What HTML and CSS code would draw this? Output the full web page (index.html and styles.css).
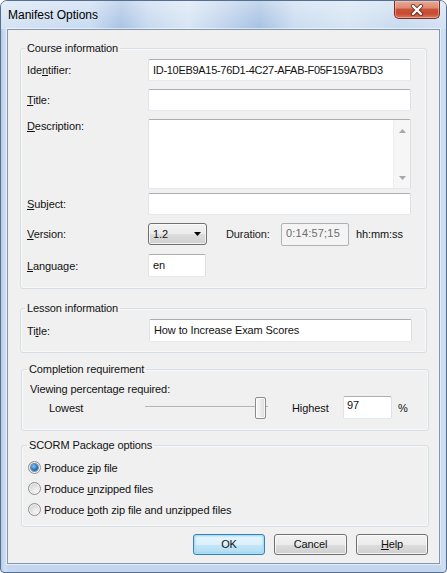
FILE: index.html
```html
<!DOCTYPE html>
<html>
<head>
<meta charset="utf-8">
<title>Manifest Options</title>
<link rel="stylesheet" href="styles.css">
</head>
<body>
<div class="window">
  <div class="titlebar">
    <span class="title">Manifest Options</span>
    <div class="close">
      <svg width="14" height="12" viewBox="0 0 14 12">
        <path d="M3 2 L11 10 M11 2 L3 10" stroke="#4a1a10" stroke-opacity="0.7" stroke-width="4.2" stroke-linecap="round" fill="none"/>
        <path d="M3 2 L11 10 M11 2 L3 10" stroke="#ffffff" stroke-width="2.4" stroke-linecap="round" fill="none"/>
      </svg>
    </div>
  </div>
  <div class="client">
    <fieldset class="group course">
      <legend>Course information</legend>
      <div class="rows">
        <div class="row r-id"><span class="lbl">Ide<u>n</u>tifier:</span><div class="tb wide id">ID-10EB9A15-76D1-4C27-AFAB-F05F159A7BD3</div></div>
        <div class="row r-title"><span class="lbl"><u>T</u>itle:</span><div class="tb wide"></div></div>
        <div class="row r-desc"><span class="lbl"><u>D</u>escription:</span>
          <div class="ta">
            <div class="ta-area"></div>
            <div class="sb">
              <svg width="7" height="4" viewBox="0 0 7 4"><path d="M0 4 L3.5 0 L7 4 Z" fill="#a8a8a8"/></svg>
              <svg width="7" height="4" viewBox="0 0 7 4"><path d="M0 0 L7 0 L3.5 4 Z" fill="#a8a8a8"/></svg>
            </div>
          </div>
        </div>
        <div class="row r-subj"><span class="lbl"><u>S</u>ubject:</span><div class="tb wide"></div></div>
        <div class="row r-ver"><span class="lbl"><u>V</u>ersion:</span>
          <div class="select"><span>1.2</span><svg width="7" height="4" viewBox="0 0 7 4"><path d="M0 0 L7 0 L3.5 4 Z" fill="#000"/></svg></div>
          <span class="dur-lbl">Duration:</span>
          <div class="tb dur">0:14:57;15</div>
          <span class="hms">hh:mm:ss</span>
        </div>
        <div class="row r-lang"><span class="lbl"><u>L</u>anguage:</span><div class="tb lang">en</div></div>
      </div>
    </fieldset>

    <fieldset class="group lesson">
      <legend>Lesson information</legend>
      <div class="rows">
        <div class="row r-ltitle"><span class="lbl lbl2">Ti<u>t</u>le:</span><div class="tb wide">How to Increase Exam Scores</div></div>
      </div>
    </fieldset>

    <fieldset class="group completion">
      <legend>Completion requirement</legend>
      <div class="rows">
        <div class="view">Viewing percentage required:</div>
        <div class="slrow">
          <span class="low">Lowest</span>
          <div class="slider"><div class="thumb"></div></div>
          <span class="high">Highest</span>
          <div class="tb pct">97</div>
          <span class="pc">%</span>
        </div>
      </div>
    </fieldset>

    <fieldset class="group scorm">
      <legend>SCORM Package options</legend>
      <div class="rows">
        <div class="radio-row"><span class="radio checked"></span><span>Produce <u>z</u>ip file</span></div>
        <div class="radio-row"><span class="radio"></span><span>Produce <u>u</u>nzipped files</span></div>
        <div class="radio-row"><span class="radio"></span><span>Produce <u>b</u>oth zip file and unzipped files</span></div>
      </div>
    </fieldset>

    <div class="buttons">
      <div class="btn default">OK</div>
      <div class="btn cancel">Cancel</div>
      <div class="btn"><u>H</u>elp</div>
    </div>
  </div>
</div>
</body>
</html>
```
FILE: styles.css
```css
* { box-sizing: border-box; }
html, body { margin: 0; padding: 0; }
body {
  width: 447px;
  height: 573px;
  overflow: hidden;
  background: #ffffff;
  font-family: "Liberation Sans", Arial, sans-serif;
  font-size: 11px;
  letter-spacing: -0.1px;
  color: #111;
}
u { text-decoration: underline; text-underline-offset: 1px; }

.window {
  width: 447px;
  height: 573px;
  border: 1px solid #55708f;
  border-radius: 7px 7px 4px 4px;
  overflow: hidden;
  display: flex;
  flex-direction: column;
  background: linear-gradient(90deg, #b6cde8 0px, #cfdff1 4px, #c4d7ee 8px, #c4d7ee 439px, #d2e1f2 443px, #b3cbe7 447px);
}

.titlebar {
  height: 28px;
  display: flex;
  justify-content: space-between;
  align-items: flex-start;
  padding: 0 6px 0 7px;
  background:
    linear-gradient(180deg, rgba(255,255,255,0.35) 0px, rgba(255,255,255,0) 28px),
    linear-gradient(90deg, #d6e4f3 0%, #cfdff1 8%, #c9dbf0 20%, #a9c3e3 27%, #c6d9ef 33%, #d8e5f4 42%, #b9cfea 52%, #a6c1e2 58%, #cadcf0 66%, #d6e4f3 78%, #c7daef 90%, #d3e2f3 100%);
}
.title {
  font-family: "Liberation Sans", Arial, sans-serif;
  font-size: 12px;
  letter-spacing: 0;
  line-height: 28px;
  color: #000;
}
.close {
  width: 46px;
  height: 18px;
  border: 1px solid #7b2d21;
  border-top: none;
  border-radius: 0 0 5px 5px;
  background: linear-gradient(180deg, #e9a995 0%, #dc8a73 40%, #c9523a 50%, #c84a31 75%, #d97a5f 100%);
  box-shadow: inset 0 0 0 1px rgba(255,220,210,0.45);
  display: flex;
  align-items: center;
  justify-content: center;
}

.client {
  margin: 0 6px;
  height: 535px;
  border: 1px solid #8397b0;
  background: #f0f0f0;
  box-shadow: 0 0 0 1px rgba(255,255,255,0.55);
}

.group {
  margin: 0;
  padding: 0;
  min-width: 0;
  border: 1px solid #d5dfe5;
  border-radius: 3px;
  box-shadow: inset 0 0 0 1px rgba(255,255,255,0.5);
}
.group legend {
  padding: 0 2px;
  margin-left: 4px;
  line-height: 14px;
  font-size: 11px;
  color: #111;
}
.course { margin: 11px 0 0 12px; width: 407px; height: 248px; }
.lesson { margin: 12px 0 0 12px; width: 407px; height: 52px; }
.completion { margin: 9px 0 0 13px; width: 408px; height: 69px; }
.scorm { margin: 7px 0 0 13px; width: 408px; height: 89px; }
.completion legend, .scorm legend { margin-left: 5px; }

.course .rows { padding: 4px 0 0 6px; }
.lesson .rows { padding: 4px 0 0 6px; }
.completion .rows { padding: 6px 0 0 8px; }
.scorm .rows { padding: 5px 0 0 6px; }

.row { display: flex; align-items: center; }
.lbl { width: 121px; flex: none; }
.lbl2 { width: 122px; }
.r-id { height: 22px; margin-bottom: 8px; }
.r-title { height: 22px; margin-bottom: 8px; }
.r-desc { height: 70px; margin-bottom: 4px; align-items: flex-start; }
.r-desc .lbl { line-height: 14px; }
.r-subj { height: 22px; margin-bottom: 8px; }
.r-ver { height: 22px; margin-bottom: 9px; }
.r-lang { height: 23px; }
.r-ltitle { height: 23px; }

.tb {
  height: 22px;
  background: #fff;
  border: 1px solid;
  border-color: #abadb3 #dbdfe6 #e3e9ef #e2e3ea;
  border-radius: 2px;
  padding: 0 4px;
  line-height: 20px;
  white-space: nowrap;
  overflow: hidden;
}
.wide { width: 263px; }
.r-ltitle .tb { height: 23px; line-height: 21px; }
.id { letter-spacing: -0.3px; }

.ta {
  width: 263px;
  height: 70px;
  display: flex;
  background: #fff;
  border: 1px solid;
  border-color: #abadb3 #dbdfe6 #e3e9ef #e2e3ea;
  border-radius: 2px;
}
.ta-area { flex: 1; }
.sb {
  width: 17px;
  background: #f6f6f6;
  border-left: 1px solid #eeeeee;
  display: flex;
  flex-direction: column;
  justify-content: space-between;
  align-items: center;
  padding: 9px 0 8px;
}

.select {
  width: 59px;
  height: 22px;
  border: 1px solid #707070;
  border-radius: 3px;
  background: linear-gradient(180deg, #f2f2f2 0%, #ebebeb 50%, #dddddd 51%, #cfcfcf 100%);
  box-shadow: inset 0 0 0 1px rgba(255,255,255,0.7);
  display: flex;
  align-items: center;
  justify-content: space-between;
  padding: 0 5px 0 4px;
}
.dur-lbl { margin-left: 19px; width: 55px; color: #222; }
.dur {
  width: 68px;
  height: 23px;
  background: #f4f4f4;
  border-color: #adb2b5;
  color: #6d6d6d;
  letter-spacing: 0.2px;
  line-height: 19px;
}
.hms { margin-left: 7px; }
.lang { width: 58px; height: 23px; line-height: 21px; }

.view { line-height: 14px; }
.slrow { display: flex; align-items: center; height: 23px; }
.low { margin-left: 19px; width: 96px; flex: none; }
.slider {
  width: 123px;
  height: 23px;
  flex: none;
  display: flex;
  align-items: center;
  background: linear-gradient(180deg, transparent 10px, #b4b4b4 10px, #b4b4b4 11px, #e6e6e6 11px, #ffffff 12px, transparent 12px);
}
.thumb {
  margin-left: 110px;
  width: 11px;
  height: 22px;
  border: 1px solid #8c8c8c;
  border-radius: 2px;
  background: linear-gradient(90deg, #f8f8f8 0%, #ececec 50%, #dadada 100%);
  box-shadow: inset 0 0 0 1px rgba(255,255,255,0.8);
}
.high { margin-left: 24px; width: 51px; flex: none; }
.pct { width: 49px; height: 23px; line-height: 16px; padding-left: 3px; }
.pc { margin-left: 6px; }

.radio-row { display: flex; align-items: center; height: 21px; }
.radio {
  width: 13px;
  height: 13px;
  border-radius: 50%;
  border: 1px solid #8e8f8f;
  background: radial-gradient(circle at 65% 70%, #f6f6f6 0%, #e2e2e2 45%, #c6c6c6 100%);
  box-shadow: inset 0 0 0 1px rgba(255,255,255,0.6);
  margin-right: 3px;
  display: flex;
  align-items: center;
  justify-content: center;
  flex: none;
}
.radio.checked::after {
  content: "";
  width: 7px;
  height: 7px;
  border-radius: 50%;
  background: radial-gradient(circle at 40% 35%, #8fcdf5 0%, #2f7fc8 45%, #0b3e78 100%);
  box-shadow: 0 0 0 1px rgba(20,60,110,0.5);
}

.buttons {
  margin-top: 7px;
  display: flex;
  justify-content: flex-end;
  gap: 9px;
  padding-right: 11px;
}
.btn {
  width: 72px;
  height: 21px;
  border: 1px solid #707070;
  border-radius: 3px;
  background: linear-gradient(180deg, #f2f2f2 0%, #ebebeb 50%, #dddddd 51%, #cfcfcf 100%);
  box-shadow: inset 0 0 0 1px rgba(255,255,255,0.75);
  text-align: center;
  line-height: 19px;
}
.btn.cancel { width: 73px; }
.btn.default {
  border-color: #3c7fb1;
  background: linear-gradient(180deg, #e8f5fc 0%, #dbf0fb 50%, #c4e6f7 51%, #b1dcf3 100%);
  box-shadow: inset 0 0 0 1px #a7e0fa, inset 0 0 2px 1px #7fd0f5;
}
```
